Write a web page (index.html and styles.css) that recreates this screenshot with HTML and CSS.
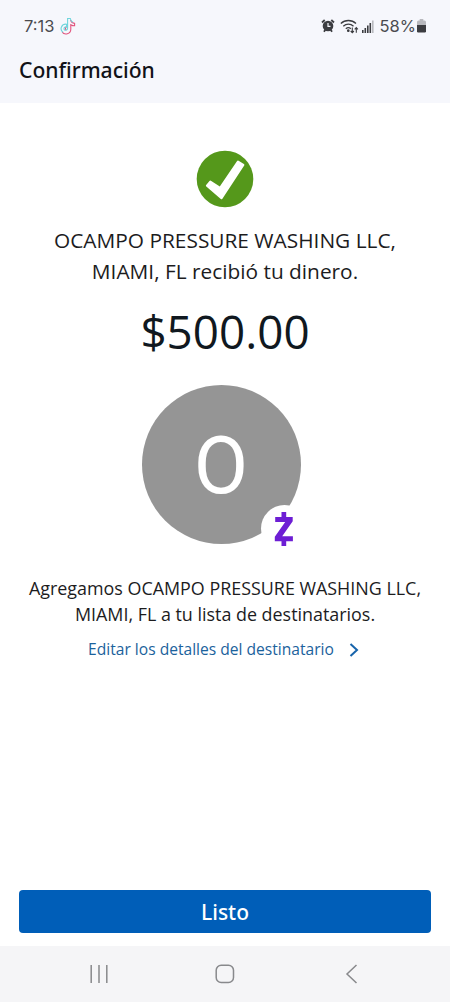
FILE: index.html
```html
<!DOCTYPE html>
<html lang="es">
  <head>
    <meta charset="UTF-8" />
    <meta name="viewport" content="width=device-width, initial-scale=1.0" />
    <title>Confirmación</title>
    <link rel="stylesheet" href="styles.css">
  </head>
  <body>
    <header>
      <div class="status">
        <span class="time">7:13</span>
        <svg class="tiktok" width="16" height="18" viewBox="0 0 16 18" fill="none" stroke-width="1.1">
          <path stroke="#e2527c" d="M10.600 3c.4 2.100 1.900 3.200 4 3.400v2.400c-1.500 0-2.700-.4-3.800-1.100v4.600c0 5-6.300 6-8.600 2.800M8 9.200c-2.300 0-3.500 3-1.500 3.900"/>
          <path stroke="#70d5dc" d="M13 5.200C11.400 4.500 10.500 3.200 10.300 1.500H7.600v9.800c0 2.400-3.500 2.700-3.600.5 0-1.500 1.200-2.200 2.600-1.900V7.200C1.500 6.600-.8 12.500 3 15.300"/>
        </svg>
        <div class="signals">
          <svg class="alarm" width="14" height="14" viewBox="0 0 14 14">
            <path d="M1 3.500 3.700 1M13 3.500 10.300 1M3 12.800l1.300-2M11 12.800l-1.300-2" stroke="#3c3d41" stroke-width="1.800" />
            <circle cx="7" cy="7" r="5.300" fill="#3c3d41" />
            <path d="M7 4v3.300h2.500" fill="none" stroke="#f6f7fc" stroke-width="1.200" />
          </svg>
          <svg class="wifi" width="19" height="15" viewBox="0 0 19 15" fill="none" stroke="#3c3d41" stroke-width="1.300">
            <path d="M.8 4.500c4.200-4 11-4 15.200 0M3.300 7.200c2.900-2.700 7.300-2.700 10.200 0M5.800 9.800c1.500-1.300 3.700-1.300 5 0" />
            <circle cx="8.300" cy="11.700" r=".7" fill="#3c3d41" />
            <path d="M12.300 8.500v5M10.700 12l1.600 1.700 1.600-1.700M16.300 13.800v-5M14.700 10.300l1.600-1.700 1.600 1.700" stroke-width="1.100" />
          </svg>
          <svg class="bars" width="12" height="13" viewBox="0 0 12 13">
            <path d="M0 10h1.600v3H0zM2.500 8h1.600v5H2.500zM5 5.500h1.600V13H5zM7.500 3h1.600v10H7.500z" fill="#3c3d41" />
            <path d="M10 .500h1.600V13H10z" fill="#b9babf" />
          </svg>
          <span class="percent">58%</span>
          <svg class="battery" width="9" height="14" viewBox="0 0 9 14">
            <path d="M2.700 0h3.600v1.400h1.200Q9 1.400 9 3v3H0V3q0-1.600 1.500-1.600h1.200z" fill="#b8b9be" />
            <path d="M0 6h9v6.300q0 1.200-1.200 1.200H1.200Q0 13.500 0 12.300z" fill="#3c3d41" />
          </svg>
        </div>
      </div>
      <h1>Confirmación</h1>
    </header>

    <main>
      <svg class="check" width="58" height="58" viewBox="0 0 58 58">
        <circle cx="29" cy="29" r="28.300" fill="#55981b" />
        <path d="M11 35.700 14.300 31.700 24 38 42 11.700 47.300 14.900 25.500 48.100z" fill="#fff" stroke="#fff" stroke-width="2.200" stroke-linejoin="round" />
      </svg>
      <p class="received">OCAMPO PRESSURE WASHING LLC,<br>MIAMI, FL recibió tu dinero.</p>
      <p class="amount">$500.00</p>

      <div class="avatar">
        <span class="letter">O</span>
        <div class="badge">
          <svg width="20" height="34" viewBox="0 0 20 34">
            <path d="M7.500 0h4.700v5h6.500v4.300L8.200 24.300h10.700v5h-6.700V34H7.500v-4.700H.800v-4.500L11.200 10H1.200V5h6.300z" fill="#6d1ed4" />
          </svg>
        </div>
      </div>

      <p class="added">Agregamos OCAMPO PRESSURE WASHING LLC,<br>MIAMI, FL a tu lista de destinatarios.</p>
      <a class="edit">
        <span>Editar los detalles del destinatario</span>
        <svg width="10" height="14" viewBox="0 0 10 14" fill="none" stroke="#1764ab" stroke-width="2">
          <path d="M1.500 1 8 7l-6.500 6" />
        </svg>
      </a>
    </main>

    <button class="done">Listo</button>

    <nav>
      <svg width="18" height="20" viewBox="0 0 18 20" stroke="#88898c" stroke-width="1.500">
        <path d="M1.200 1v18M9 1v18M16.800 1v18" />
      </svg>
      <svg width="20" height="20" viewBox="0 0 20 20" fill="none" stroke="#88898c" stroke-width="1.500">
        <rect x="1.200" y="1.200" width="17.300" height="17.300" rx="5" />
      </svg>
      <svg width="18" height="20" viewBox="0 0 18 20" fill="none" stroke="#88898c" stroke-width="1.500">
        <path d="M14.500 1 5 10l9.500 9" />
      </svg>
    </nav>
  </body>
</html>
```
FILE: styles.css
```css
* {
  box-sizing: border-box;
}
body {
  margin: 0;
  height: 1002px;
  display: flex;
  flex-direction: column;
  background: #fff;
  color: #1c1c1e;
  font-family: "Noto Sans", "Open Sans", sans-serif;
}
p, h1 {
  margin: 0;
}
svg {
  display: block;
  flex-shrink: 0;
}

header {
  height: 103px;
  background: #f6f7fc;
}
.status {
  height: 52px;
  padding: 0 24px;
  display: flex;
  align-items: center;
  font-family: Inter, Roboto, sans-serif;
  font-size: 16.5px;
  color: #4a4b4f;
}
.tiktok {
  margin-left: 6px;
}
.signals {
  margin-left: auto;
  display: flex;
  align-items: center;
}
.wifi {
  margin-left: 5px;
}
.bars {
  margin-left: 3px;
}
.percent {
  margin: 0 1px 0 6px;
}
h1 {
  padding-left: 19px;
  font-size: 21.1px;
  font-weight: 500;
  line-height: 36px;
  color: #111217;
}

main {
  flex: 1;
  display: flex;
  flex-direction: column;
  align-items: center;
  text-align: center;
}
.check {
  margin-top: 47px;
}
.received {
  margin-top: 17px;
  font-family: "Open Sans", sans-serif;
  font-size: 20.85px;
  line-height: 31px;
}
.amount {
  margin-top: 13px;
  font-family: "Open Sans", sans-serif;
  font-size: 45.8px;
  line-height: 62px;
  color: #101820;
}
.avatar {
  position: relative;
  margin-top: 23px;
  margin-right: 8px;
  width: 159px;
  height: 159px;
  border-radius: 50%;
  background: #959595;
  display: flex;
  align-items: center;
  justify-content: center;
}
.letter {
  font-family: Roboto, sans-serif;
  font-size: 79px;
  line-height: 1;
  padding-top: 3px;
  color: #fff;
}
.badge {
  position: absolute;
  right: -7px;
  bottom: -8px;
  width: 47px;
  height: 47px;
  border-radius: 50%;
  background: #fff;
  display: flex;
  align-items: center;
  justify-content: center;
}
.added {
  margin-top: 31px;
  font-family: "Open Sans", sans-serif;
  font-size: 17.9px;
  line-height: 26px;
}
.edit {
  margin-top: 9px;
  margin-right: 3px;
  display: flex;
  align-items: center;
  gap: 15px;
  font-family: "Open Sans", sans-serif;
  font-size: 15.6px;
  line-height: 27px;
  color: #1b629c;
}

.done {
  height: 43px;
  margin: 0 19px 13px;
  padding: 0;
  border: 0;
  border-radius: 4px;
  background: #005eb8;
  color: #fff;
  font: 500 21px "Noto Sans", sans-serif;
}
nav {
  height: 56px;
  background: #f5f5f7;
  padding: 0 90px;
  display: flex;
  align-items: center;
  justify-content: space-between;
}
```
